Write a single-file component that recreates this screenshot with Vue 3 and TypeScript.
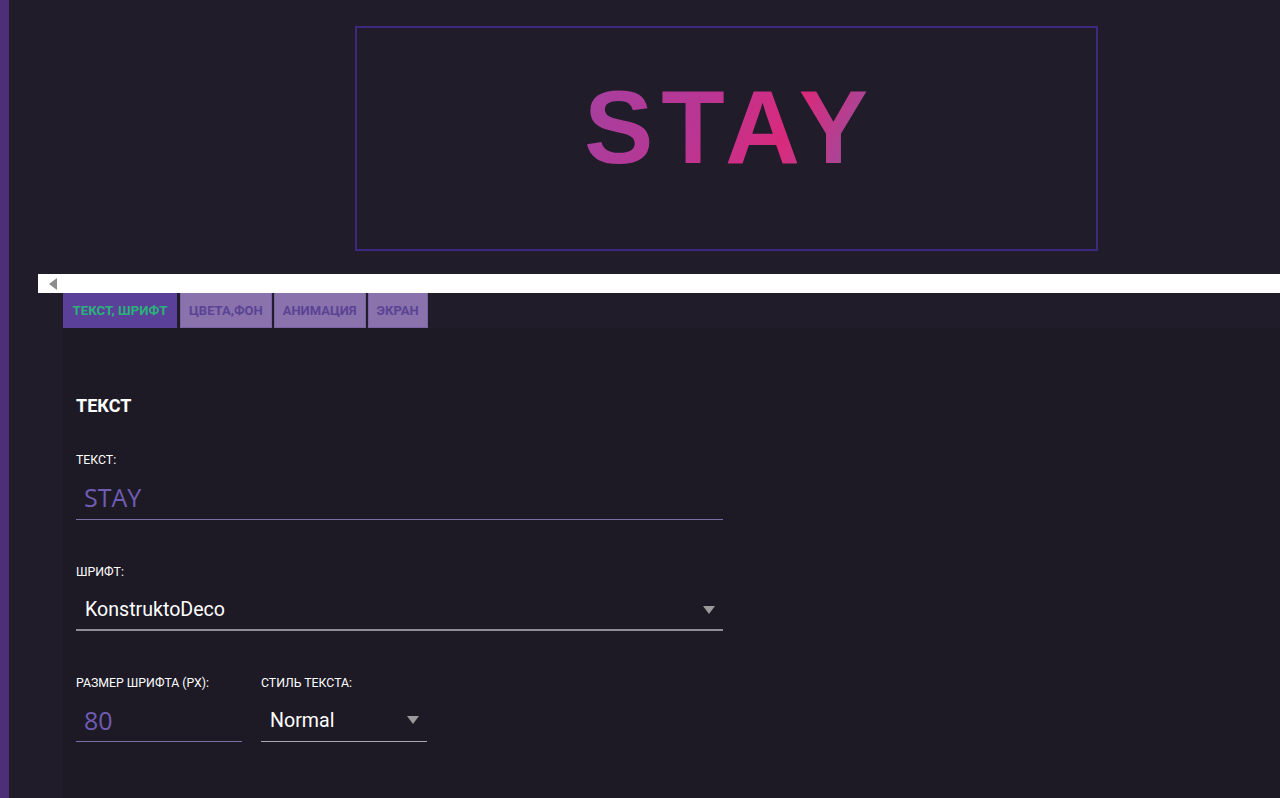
<script setup lang="ts">
import { ref } from "vue"

const tabs = ["Текст, шрифт", "Цвета,фон", "Анимация", "Экран"]
const active = ref(0)
const text = ref("STAY")
const size = ref(80)
</script>

<template>
  <div class="page">
    <div class="strip"></div>
    <div class="main">
      <div class="preview">
        <div class="frame">
          <span class="logo">{{ text }}</span>
        </div>
      </div>
      <div class="scroller">
        <span class="scroll-arrow"></span>
      </div>
      <div class="content">
        <div class="tabs">
          <button
            v-for="(tab, i) in tabs"
            :key="tab"
            class="tab"
            :class="{ active: i === active }"
            @click="active = i"
          >
            {{ tab }}
          </button>
        </div>
        <div class="panel">
          <h2 class="title">Текст</h2>
          <div class="field wide">
            <label class="label">Текст:</label>
            <input v-model="text" class="input" />
          </div>
          <div class="field wide select-field">
            <label class="label">Шрифт:</label>
            <div class="select">
              <span>KonstruktoDeco</span>
              <i class="caret"></i>
            </div>
          </div>
          <div class="row">
            <div class="field narrow">
              <label class="label">Размер шрифта (px):</label>
              <input v-model="size" class="input" />
            </div>
            <div class="field narrow select-field">
              <label class="label">Стиль текста:</label>
              <div class="select">
                <span>Normal</span>
                <i class="caret"></i>
              </div>
            </div>
          </div>
        </div>
      </div>
    </div>
  </div>
</template>

<style>
html,
body {
  margin: 0;
  background: #211d2b;
}
</style>

<style scoped>
.page {
  display: flex;
  height: 798px;
  overflow: hidden;
  background: #201c2a;
  font-family: Roboto, sans-serif;
}

.strip {
  width: 9px;
  flex: none;
  background: #4d2f78;
}

.main {
  flex: 1;
  min-width: 0;
}

.preview {
  height: 274px;
  padding: 26px 0 0 346px;
  box-sizing: border-box;
}

.frame {
  width: 743px;
  height: 225px;
  box-sizing: border-box;
  border: 2px solid #3b2a80;
  padding-bottom: 24px;
  display: flex;
  align-items: center;
  justify-content: center;
}

.logo {
  margin-left: 7px;
  font-family: "Liberation Sans", sans-serif;
  font-weight: 700;
  font-size: 104px;
  line-height: 90px;
  letter-spacing: 8px;
  background: linear-gradient(115deg, #a5409f 0%, #bb3593 40%, #d92a7c 68%, #8c56a6 100%);
  -webkit-background-clip: text;
  background-clip: text;
  color: transparent;
}

.scroller {
  height: 19px;
  margin-left: 29px;
  background: #fff;
  display: flex;
  align-items: center;
  padding-left: 11px;
}

.scroll-arrow {
  width: 0;
  height: 0;
  border-top: 6px solid transparent;
  border-bottom: 6px solid transparent;
  border-right: 8px solid #8c8c8c;
}

.content {
  margin-left: 54px;
}

.tabs {
  display: flex;
  gap: 2px;
  height: 35px;
}

.tab {
  border: 1px solid #7c64a4;
  border-top: 0;
  padding: 0 8px;
  background: #8a72ad;
  color: #5b4394;
  font-family: Roboto, sans-serif;
  font-size: 13px;
  font-weight: 700;
  text-transform: uppercase;
}

.tab.active {
  width: 114px;
  margin-right: 1px;
  padding: 0;
  background: #5a4099;
  border-color: #5a4099;
  color: #2bb27a;
  font-size: 13.2px;
}

.panel {
  height: 470px;
  padding: 68px 0 0 13px;
  background: #1d1a26;
}

.title {
  margin: 0;
  height: 20px;
  line-height: 20px;
  font-size: 18px;
  font-weight: 700;
  color: #fff;
  text-transform: uppercase;
}

.field {
  display: flex;
  flex-direction: column;
}

.wide {
  width: 647px;
  margin-top: 37px;
}

.select-field.wide {
  margin-top: 45px;
}

.narrow {
  width: 166px;
}

.label {
  height: 14px;
  line-height: 15px;
  margin-bottom: 8px;
  font-size: 12.3px;
  color: #fff;
  text-transform: uppercase;
}

.input {
  height: 44px;
  padding: 0 0 0 8px;
  border: 0;
  border-bottom: 1px solid #7b6fa8;
  outline: 0;
  background: transparent;
  color: #6f5cb3;
  font-family: "Open Sans", sans-serif;
  font-size: 25px;
  box-sizing: content-box;
  width: auto;
  min-width: 0;
}

.narrow .input {
  height: 43px;
}

.select {
  height: 39px;
  padding: 3px 8px 0 9px;
  border-bottom: 2px solid #8f8c96;
  display: flex;
  align-items: center;
  justify-content: space-between;
  color: #fff;
  font-size: 19.6px;
}

.narrow .select {
  height: 42px;
  padding-top: 1px;
  border-bottom-width: 1px;
  border-bottom-color: #aaa7ae;
}

.caret {
  width: 0;
  height: 0;
  border-left: 6px solid transparent;
  border-right: 6px solid transparent;
  border-top: 8px solid #9a9a9a;
}

.row {
  display: flex;
  gap: 19px;
  margin-top: 45px;
}
</style>
